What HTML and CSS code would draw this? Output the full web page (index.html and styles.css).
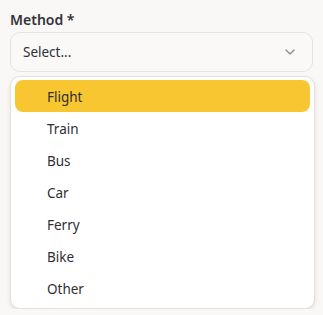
FILE: index.html
```html
<!DOCTYPE html>
<html>
<head>
<meta charset="utf-8">
<link rel="stylesheet" href="styles.css">
</head>
<body>
<div class="field">
  <label class="label">Method *</label>
  <div class="select">
    <span class="placeholder">Select...</span>
    <svg class="chevron" width="12" height="8" viewBox="0 0 12 8"><path d="M2 2 L6 6 L10 2" fill="none" stroke="#8a8784" stroke-width="1.3" stroke-linecap="round" stroke-linejoin="round"/></svg>
  </div>
  <ul class="menu">
    <li class="item active">Flight</li>
    <li class="item">Train</li>
    <li class="item">Bus</li>
    <li class="item">Car</li>
    <li class="item">Ferry</li>
    <li class="item">Bike</li>
    <li class="item">Other</li>
  </ul>
</div>
</body>
</html>
```
FILE: styles.css
```css
html, body {
  margin: 0;
  padding: 0;
  background: #f9f8f6;
}
body {
  font-family: "Noto Sans", "Open Sans", sans-serif;
  color: #2f2f33;
}
.field {
  padding: 10px 9px 0 10px;
  display: flex;
  flex-direction: column;
}
.label {
  font-size: 14px;
  font-weight: 600;
  line-height: 20px;
  color: #333338;
  margin-bottom: 2px;
}
.select {
  box-sizing: border-box;
  width: 303px;
  height: 40px;
  border: 1px solid #e6e3de;
  border-radius: 10px;
  background: #faf9f7;
  display: flex;
  align-items: center;
  justify-content: space-between;
  padding: 0 16px 0 12px;
}
.placeholder {
  font-size: 13.5px;
  color: #2f2f33;
}
.chevron {
  display: block;
}
.menu {
  list-style: none;
  margin: 4px 0 0 0;
  box-sizing: border-box;
  width: 305px;
  padding: 3px 4px 4px 4px;
  background: #fff;
  border: 1px solid #e4e1dc;
  border-radius: 10px;
  box-shadow: 0 2px 4px rgba(0,0,0,0.10);
}
.item {
  box-sizing: border-box;
  height: 32px;
  display: flex;
  align-items: center;
  padding: 2px 0 0 32px;
  font-size: 13.5px;
  color: #2f2f33;
  border-radius: 8px;
}
.item.active {
  background: #f7c631;
}
```
